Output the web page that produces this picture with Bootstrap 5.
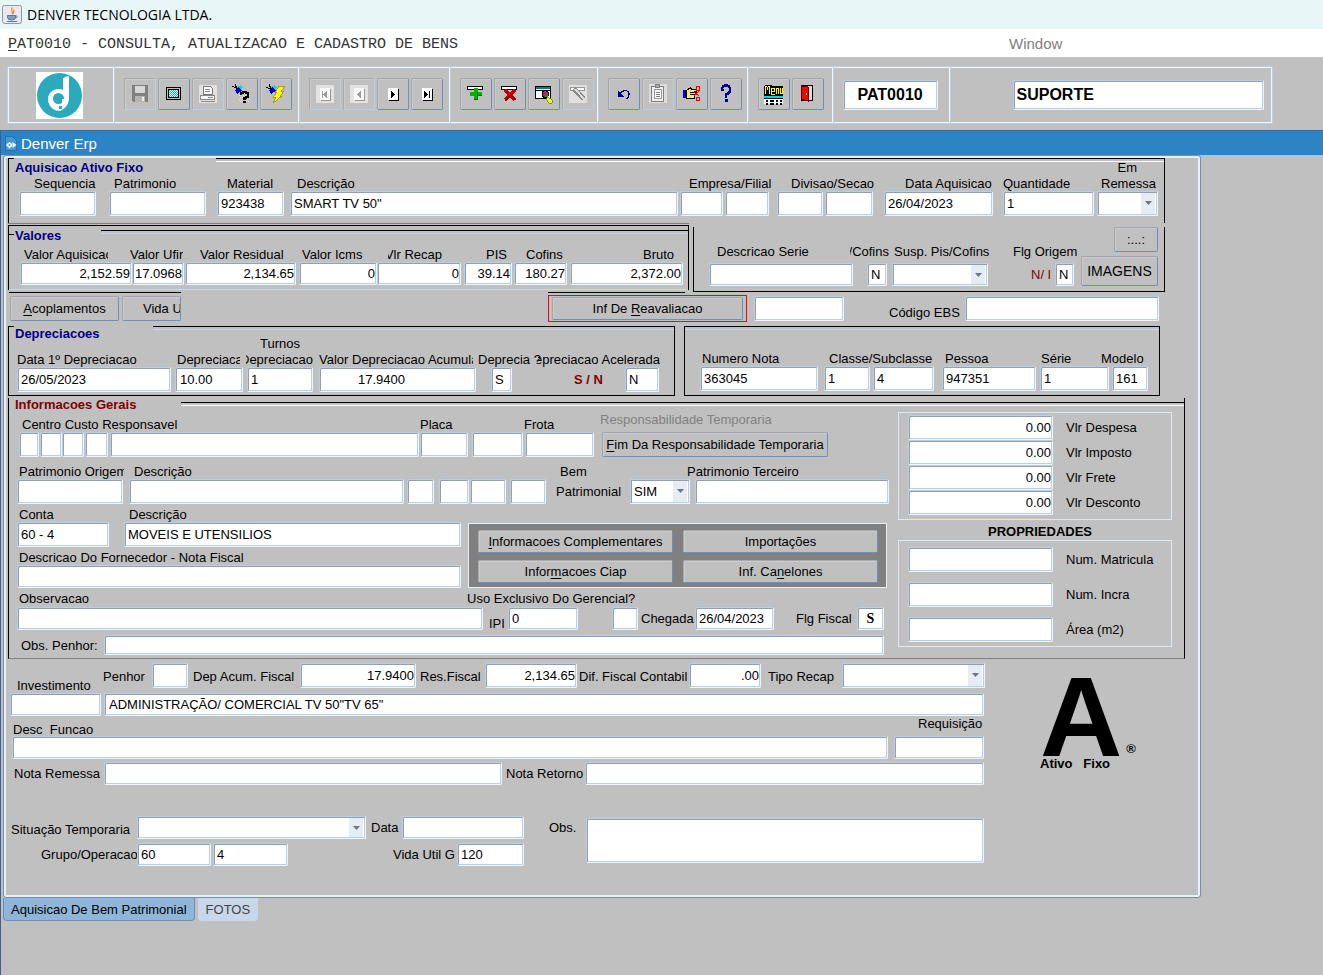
<!DOCTYPE html>
<html lang="pt-BR">
<head>
<meta charset="utf-8">
<meta name="viewport" content="width=device-width, initial-scale=1">
<title>DENVER TECNOLOGIA LTDA.</title>
<link href="https://cdn.jsdelivr.net/npm/bootstrap@5.3.0/dist/css/bootstrap.min.css" rel="stylesheet">
<style>
:root{--face:#c0c0c0;--line:#b8cfe5;--steel:#6f8fb3}
body{font:13px/15px "Liberation Sans",Arial,sans-serif;color:#000;background:var(--face)}
.titlebar{background:#e8f6f8;height:29px;font:14px/28px "Open Sans",sans-serif;gap:5px;padding-left:2px}
.menubar{height:28px;padding-left:8px;font:15px/31px "Liberation Mono",monospace;color:#333}
.menubar a{color:#333;text-decoration:none}
.menubar .win{font:15px/30px "Liberation Sans",sans-serif;color:#808080;flex:0 1 314px}
u{text-underline-offset:2px}
/* toolbar */
.tools{margin:9px 50px 6px 7px;border:1px solid var(--line);box-shadow:inset 0 0 0 1px #f2f6fb;display:grid;grid-template-columns:106fr 185fr 152fr 148fr 150fr 85fr 117fr 323fr;height:58px}
.tools>div{display:flex;align-items:center;gap:2px;padding:0 0 3px 10px;min-width:0;border-right:1px solid #f2f6fb;box-shadow:1px 0 var(--line)}
.tools>div:last-child{border:0;box-shadow:none;padding:0 8px 1px 63px}
.tools>div:first-child{padding:0 2px 0 0;justify-content:center}
.tools>.code{padding:0 11px 1px 10px}
.tbtn,.push{background:var(--face);border:1px solid;border-color:#a2a6ab var(--steel) var(--steel) #a2a6ab;border-radius:2px;padding:0;color:#000;box-shadow:inset 1px 1px #c9cbce}
.tbtn{width:32px;height:32px;flex:none;display:flex;align-items:center;justify-content:center}
.tbtn:disabled{border-color:#aaa var(--line) var(--line) #aaa}
.tbtn svg{width:22px;height:22px;shape-rendering:crispEdges;overflow:visible}
.push{height:25px;font-size:13px;line-height:15px;white-space:nowrap;overflow:hidden}
.big{font-size:14px;height:30px}
.dots{width:44px}
/* fields */
.fld{display:block;width:100%;min-width:0;height:25px;padding:0 3px;font-size:13px;line-height:15px;color:#000;background-color:#fff;border:1px solid;border-color:var(--line) #f0f5fb #f0f5fb var(--line);border-radius:2px;box-shadow:inset 1px 1px #959eac,inset -1px -1px var(--line)}
.low .fld{height:23px}
.fld.tiny{height:20px}
.num{text-align:right;padding-right:1px}
.num.spill{direction:rtl}
.code .fld,.user{font-weight:700;font-size:16px;height:30px}
.code .fld{text-align:center}
select.fld{appearance:none;padding-right:16px;border-radius:1px;background-image:url("data:image/svg+xml,%3Csvg xmlns='http://www.w3.org/2000/svg' viewBox='0 0 7 4'%3E%3Cpath fill='%236b7590' d='M0 0h7L3.500 4z'/%3E%3C/svg%3E"),linear-gradient(#e6ecf4,#e6ecf4);background-size:7px 4px,14px 100%;background-position:right 5px top 9px,right 2px top;background-repeat:no-repeat}
.indent{padding-left:38px}
.low textarea.fld{height:45px;resize:none;margin-top:2px}
.serif{font:700 14px/15px "Liberation Serif",serif;text-align:center}
/* form lines: tracks alternate space / item */
.ln{display:grid;min-width:0}
.ln>*{min-width:0;grid-row:1;white-space:nowrap}
.ln>:nth-child(1){grid-column:2}.ln>:nth-child(2){grid-column:4}.ln>:nth-child(3){grid-column:6}
.ln>:nth-child(4){grid-column:8}.ln>:nth-child(5){grid-column:10}.ln>:nth-child(6){grid-column:12}
.ln>:nth-child(7){grid-column:14}.ln>:nth-child(8){grid-column:16}.ln>:nth-child(9){grid-column:18}
.ln>:nth-child(10){grid-column:20}.ln>:nth-child(11){grid-column:22}
/* captions: one leading space, then item after item */
.cap{display:grid;min-width:0;align-items:end}
.cap>*{min-width:0;white-space:nowrap}
.cap>:first-child{grid-column:2}
.cut{overflow:hidden}
.cutl{overflow:hidden;display:flex;justify-content:flex-end}
.mid{align-items:center}
/* group frames */
.hd{display:flex;height:14px}
.hd .tick{width:5px;border-top:1px solid #000}
.hd h2{font-size:13px;font-weight:700;line-height:14px;margin:0;padding-left:1px;color:#000080;flex:none}
.rule{height:4px;border-top:1px solid #000;border-bottom:1px solid #c5d6ea}
.rule.w{border-bottom-color:#fff}
.maroon,.hd .maroon{color:#800000}
.gray{color:#808080}
.blk-l{border-left:1px solid #000}.blk-r{border-right:1px solid #000}.blk-b{border-bottom:1px solid #000}
.soft{border-bottom:1px solid #c9d9ea}
.sheet{margin:0 122px 0 2px;border:1px solid var(--steel);border-radius:3px;box-shadow:inset 0 0 0 2px #e9eff7;padding:2px 1px 2px 2px}
.frame{border-left:1px solid #3d5f92;min-height:845px}
.cappt{background:#2d84c4;color:#fff;height:25px;font-size:15px;line-height:27px;gap:4px;padding-left:4px;border-top:1px solid #3a6ea5}
.acq{margin:0 34px 0 2px}
.acqtop{padding-bottom:7px}
.acqtop .hd{height:18px}
.acqtop h2{line-height:20px;width:202px}
.acqtop .em{text-align:right;padding-right:27px;line-height:12px}
.acq2{display:grid;grid-template-columns:681fr 4fr 472fr}
.acq2>*{min-width:0}
.edge{height:3px;border-top:1px solid #808080;border-bottom:1px solid #000}
.valores h2{width:87px;line-height:12px}
.valores .c-v1{padding-top:7px}
.pisbox{padding-bottom:5px;margin-bottom:2px}
.pisbtns{padding-right:6px}
.redbox{border:1px solid #f00;padding:1px 3px}
.redbox .push{height:23px;display:block}
.duo{display:grid;grid-template-columns:2fr 667fr 9fr 476fr 39fr;padding-top:4px}
.dep{height:26px}
.dep h2{width:139px;line-height:16px}
.turn{padding:6px 0 0 107px}
.c-d2{padding-bottom:3px}
.nota{display:flex;flex-direction:column}
.nota .c-n1{flex-grow:1}
.infos{margin:2px 14px 0 2px;border-bottom:1px solid #808080}
.infos h2{width:167px}
.tall{height:20px}
.c-i3{padding-top:7px}
.gap3{padding-top:3px}
.gap2{padding-top:2px}
.side{border:1px solid #dfe9f5;padding:2px 0 4px}
.rightc{padding:0 12px 0 9px}
.prop{font-weight:700;line-height:24px;height:20px;text-align:center;padding-left:10px}
.wide{display:grid;gap:10px;padding-top:6px}
.dark{background:#808080;border:1px solid #e6eef8;padding:6px 8px 4px 9px;display:grid;grid-template-columns:1fr 1fr;gap:7px 10px}
.dark .push{border-top-color:#aaa;border-left-color:#aaa;height:23px}
.foot{padding:4px 0 29px}
.sit{padding-top:31px}
.brand{padding:14px 0 0 52px}
.biga{font-size:114px;line-height:79px;font-weight:700}
.brand b{line-height:15px}
.tabs{padding-left:2px;gap:3px}
.tabs button{border:1px solid var(--steel);border-top:0;border-radius:0 0 4px 4px;background:#8fb5d9;height:23px;padding:0 7px;line-height:15px}
.tabs button+button{background:#c9d7ea;border-color:#c9d7ea;color:#444}
/* column plans */
.c-a1{grid-template-columns:25fr 80fr 113fr 70fr 392fr 102fr 114fr 98fr 98fr 63fr}
.c-a2{grid-template-columns:10fr 77fr 13fr 97fr 11fr 67fr 6fr 388fr 2fr 43fr 2fr 44fr 8fr 46fr 2fr 48fr 11fr 109fr 10fr 91fr 3fr 61fr 6fr}
.c-v1{grid-template-columns:15fr 84fr 22fr 53fr 17fr 85fr 17fr 65fr 21fr 54fr 44fr 22fr 18fr 44fr 73fr 40fr 5fr}
.c-v2{grid-template-columns:11fr 112fr 0fr 52fr 1fr 111fr 3fr 78fr 0fr 84fr 3fr 48fr 2fr 53fr 3fr 113fr 5fr}
.c-v3{grid-template-columns:1fr 172fr 367fr 137fr 4fr}
.c-s0{grid-template-columns:387fr 83fr}
.c-s1{grid-template-columns:23fr 95fr 38fr 39fr 5fr 98fr 21fr 66fr 2fr}
.c-s2{grid-template-columns:15fr 144fr 14fr 20fr 5fr 96fr 43fr 20fr 4fr 19fr 7fr}
.c-b{grid-template-columns:4fr 109fr 3fr 59fr 367fr 199fr 7fr 90fr 45fr 72fr 4fr 194fr 40fr;padding-top:1px}
.c-d1{grid-template-columns:8fr 116fr 44fr 63fr 6fr 67fr 6fr 154fr 5fr 60fr 0fr 122fr 14fr}
.c-d2{grid-template-columns:8fr 154fr 4fr 68fr 4fr 66fr 6fr 157fr 15fr 21fr 62fr 30fr 21fr 34fr 15fr}
.c-n1{grid-template-columns:17fr 127fr 116fr 96fr 60fr 58fr}
.c-n2{grid-template-columns:15fr 118fr 6fr 46fr 3fr 61fr 8fr 94fr 4fr 69fr 3fr 36fr 11fr}
.c-i0{grid-template-columns:880fr 295fr}
.c-i1{grid-template-columns:13fr 398fr 104fr 76fr 289fr}
.c-i2{grid-template-columns:10fr 20fr 1fr 22fr 0fr 22fr 1fr 23fr 2fr 309fr 1fr 48fr 4fr 51fr 2fr 69fr 8fr 226fr 61fr}
.c-i3{grid-template-columns:10fr 105fr 10fr 60fr 366fr 30fr 97fr 116fr 86fr}
.c-i4{grid-template-columns:8fr 106fr 6fr 275fr 3fr 27fr 5fr 30fr 1fr 36fr 4fr 36fr 10fr 66fr 8fr 60fr 5fr 194fr}
.c-i5{grid-template-columns:459fr 419fr 2fr}
.c-i6{grid-template-columns:10fr 110fr 339fr}
.c-i7{grid-template-columns:8fr 92fr 15fr 337fr 7fr}
.c-i8{grid-template-columns:8fr 444fr 7fr}
.c-i9{grid-template-columns:10fr 448fr 422fr}
.c-i10{grid-template-columns:8fr 466fr 6fr 18fr 1fr 70fr 34fr 26fr 3fr 53fr 1fr 79fr 22fr 59fr 2fr 27fr 5fr;height:25px}
.c-i11{grid-template-columns:12fr 78fr 5fr 780fr 5fr;padding:4px 0 3px}
.c-r{grid-template-columns:9fr 145fr 13fr 105fr}
.c-z0{grid-template-columns:982fr 211fr}
.c-z1{grid-template-columns:11fr 78fr 8fr 45fr 4fr 36fr 5fr 106fr 1fr 116fr 4fr 64fr 1fr 92fr 2fr 109fr 1fr 72fr 7fr 68fr 6fr 143fr 3fr;height:30px}
.c-z2{grid-template-columns:4fr 91fr 3fr 880fr 4fr}
.c-z3{grid-template-columns:7fr 905fr 70fr;height:20px}
.c-z4{grid-template-columns:6fr 876fr 6fr 90fr 4fr}
.c-z5{grid-template-columns:8fr 87fr 3fr 398fr 4fr 78fr 1fr 399fr 4fr}
.c-z6{grid-template-columns:0fr 537fr 6fr 31fr 6fr 398fr 4fr}
.c-z7{grid-template-columns:5fr 121fr 5fr 229fr 5fr 29fr 2fr 122fr 19fr}
.c-z8{grid-template-columns:35fr 95fr 1fr 74fr 2fr 75fr 105fr 64fr 0fr 67fr 19fr}
.c-z1 label{line-height:28px}
.c-z1 .inv{line-height:15px;align-self:end}
.c-z3 .low-cap{line-height:12px}
.c-i0,.c-i5,.c-z0,.c-s0{display:grid}
.c-i0>*,.c-i5>*,.c-z0>*,.c-s0>*{min-width:0}
</style>
</head>
<body>
<header>
  <div class="titlebar d-flex align-items-center">
    <svg width="20" height="20" viewBox="0 0 20 20" aria-hidden="true"><rect x=".5" y=".5" width="19" height="18" rx="2" fill="#e9e9e9" stroke="#8b9aa3"/><path d="M10.500 2.500c-3 3 1.500 3.500-.5 6.500M12.500 5c-2 1.500 0 2.500-1.500 4" stroke="#e8853a" stroke-width="1.200" fill="none"/><path d="M5.500 10.500h8v2a4 2.500 0 0 1-8 0z" fill="#7d9fc0" stroke="#4d7ba6"/><path d="M13.500 11c2.500-.5 2 2-.5 2M5 16.500h10" stroke="#4d7ba6" fill="none"/></svg>
    <span>DENVER TECNOLOGIA LTDA.</span>
  </div>
  <nav class="menubar bg-white d-flex justify-content-between">
    <a href="#"><u>P</u>AT0010 - CONSULTA, ATUALIZACAO E CADASTRO DE BENS</a><a href="#" class="win">Window</a>
  </nav>
  <div class="tools" role="toolbar" aria-label="Ferramentas">
    <div><svg width="47" height="47" viewBox="0 0 47 47" role="img" aria-label="Denver"><path fill="#fff" d="M0 0h47v47H0z"/><circle cx="23.500" cy="23.500" r="22.500" fill="#2ba9bd"/><path fill="#fff" d="M27 6.500q3.500-3 6-2V26c0 5-2.500 9-6 11-1.500 2-5 2.500-8 1-4-2-7-6-7-11 0-6 5-10 10.500-10 1.700 0 3.300.3 4.500 1z"/><circle cx="22.500" cy="26.500" r="5.500" fill="#2ba9bd"/><path d="M27 27v5q-2 3-6 2" fill="none" stroke="#fff" stroke-width="2"/><circle cx="24.500" cy="35.500" r="1.800" fill="#2ba9bd"/></svg></div>
    <div>
      <button class="tbtn" disabled aria-label="Salvar"><svg viewBox="0 0 22 22"><path fill="#808080" d="M3 2h16v17H4l-1-1z"/><path fill="#d8d8d8" d="M6 3h10v7H6z"/><path fill="#b4b4b4" d="M6 13h10v6H6z"/><path fill="#eee" d="M13 14h2v4h-2z"/></svg></button>
      <button class="tbtn" aria-label="Tela"><svg viewBox="0 0 22 22"><path fill="none" stroke="#000" d="M3.500 4.500h14v12h-14zM5.500 6.500h10v8h-10z"/><path fill="#fff" d="M6 7h9v7H6z"/><path stroke="#00c8c8" stroke-dasharray="1 1" d="M6 7.500h9M7 8.500h8M6 9.500h9M7 10.500h8M6 11.500h9M7 12.500h8M6 13.500h9"/></svg></button>
      <button class="tbtn" disabled aria-label="Imprimir"><svg viewBox="0 0 22 22"><path fill="#e2e2e2" d="M2 2h18v18H2z"/><path fill="#fff" stroke="#777" d="M6.500 3.500h7l2 2v6h-9z"/><path stroke="#888" d="M8 6.500h5M8 8.500h5"/><path fill="#f5f5f5" stroke="#888" d="M3.500 12.500h14v4h-14z"/><path stroke="#888" d="M11 14.500h5M4 18.500h14"/></svg></button>
      <button class="tbtn" aria-label="Consulta"><svg viewBox="0 0 22 22"><path stroke="#000" d="M1 3l4 2M4 1l2 5"/><path fill="#00d8e8" d="M6 4l4-2 2 3-4 3z"/><path fill="#0000c8" d="M4 7l4-3 3 4-5 3z"/><path stroke="#ff0" stroke-dasharray="1 1" d="M9 10.500h10M8 12.500h11M9 14.500h10M8 16.500h11M9 18.500h10"/><path fill="none" stroke="#000" stroke-width="2.500" d="M10 12q0-3 3.500-3t3.500 3-3.500 3v2"/><path d="M12 18h3v2h-3z"/></svg></button>
      <button class="tbtn" aria-label="Executar"><svg viewBox="0 0 22 22"><path stroke="#000" d="M1 4l4 2M4 1l2 5"/><path fill="#00d8e8" d="M6 4l4-2 2 3-4 3z"/><path fill="#0000c8" d="M4 7l4-3 3 4-5 3z"/><path fill="#ff0" stroke="#8a8400" stroke-width=".7" d="M14 3h6l-4 5h3l-4 5h2l-9 7 3-6H8l4-5h-2z"/></svg></button>
    </div>
    <div>
      <button class="tbtn" disabled aria-label="Primeiro"><svg viewBox="0 0 22 22"><path fill="#e2e2e2" d="M2 2h18v18H2z"/><path fill="#fafafa" d="M6 5h10v12H6z"/><path fill="#999" d="M16 6h1v12H7v-1h9zM8 8h1v7H8zM13 8v7l-4-3.500z"/></svg></button>
      <button class="tbtn" disabled aria-label="Anterior"><svg viewBox="0 0 22 22"><path fill="#e2e2e2" d="M2 2h18v18H2z"/><path fill="#fafafa" d="M6 5h10v12H6z"/><path fill="#999" d="M16 6h1v12H7v-1h9zM13 8v7l-4-3.500z"/></svg></button>
      <button class="tbtn" aria-label="Proximo"><svg viewBox="0 0 22 22"><path fill="#fff" d="M6 5h10v12H6z"/><path d="M16 6h1v12H7v-1h9zM9 8v7l4-3.500z"/></svg></button>
      <button class="tbtn" aria-label="Ultimo"><svg viewBox="0 0 22 22"><path fill="#fff" d="M6 5h10v12H6z"/><path d="M16 6h1v12H7v-1h9zM8 8v7l4-3.500zM13 8h1v7h-1z"/></svg></button>
    </div>
    <div>
      <button class="tbtn" aria-label="Incluir"><svg viewBox="0 0 22 22"><path fill="#fff" stroke="#000" d="M2.500 3.500h15v3h-15z"/><path fill="#00b400" d="M9 5h4v4h4v4h-4v4H9v-4H5V9h4z"/><path fill="#006400" d="M12 9h1v8H9v-1h3zM13 12h4v1h-4z"/></svg></button>
      <button class="tbtn" aria-label="Excluir"><svg viewBox="0 0 22 22"><path fill="#fff" stroke="#000" d="M2.500 3.500h15v3h-15z"/><path stroke="#c00000" stroke-width="3" d="M6 7l10 10M16 7L6 17"/><path stroke="#600000" d="M6 18l5-5M17 17l-4-4"/></svg></button>
      <button class="tbtn" aria-label="Filtrar"><svg viewBox="0 0 22 22"><path fill="#fff" stroke="#000" d="M2.500 3.500h15v12h-15z"/><path fill="#008080" d="M3 4h14v2H3z"/><path fill="#000" d="M2 7h16v1H2z"/><path fill="#e0008c" stroke="#000" d="M9 9l3-2 3 2v4l-3 2-3-2z"/><path fill="#00a000" d="M12 11h3v3h-3z"/><path fill="#ff0" stroke="#665" stroke-width=".7" d="M15 14l4 3v3h-3l-3-4z"/></svg></button>
      <button class="tbtn" disabled aria-label="Limpar"><svg viewBox="0 0 22 22"><path fill="#e0e0e0" d="M2 2h18v18H2z"/><path fill="#fff" stroke="#999" d="M3.500 4.500h14v3h-14z"/><path stroke="#888" stroke-width="5" d="M7 6l10 10"/><path stroke="#ddd" stroke-width="2" d="M8 6l11 12"/></svg></button>
    </div>
    <div>
      <button class="tbtn" aria-label="Desfazer"><svg viewBox="0 0 22 22"><path fill="none" stroke="#000080" stroke-width="1.300" d="M6 12c2-5 10-6 10-1 0 2-1 4-3 5"/><path fill="#000080" d="M5 8v6h6z"/></svg></button>
      <button class="tbtn" disabled aria-label="Colar"><svg viewBox="0 0 22 22"><path fill="#ddd" d="M2 1h18v19H2z"/><path fill="#eee" stroke="#808080" d="M4.500 3.500h12v15h-12z"/><path fill="#aaa" stroke="#808080" d="M8.500 1.500h4v3h-4z"/><path fill="#fff" stroke="#999" d="M7.500 6.500h7v9h-7z"/><path stroke="#808080" d="M9 9.500h4M9 11.500h4M9 13.500h4"/></svg></button>
      <button class="tbtn" aria-label="Recortar"><svg viewBox="0 0 22 22"><path fill="#0000c8" d="M2 7h3v8H2z"/><path fill="#ffe95a" stroke="#000" d="M5.500 7.500l4-3 1 2h5v2h-2v1h2v2h-2v4h-8z"/><path stroke="#000" d="M9 9.500h4M9 11.500h4"/><path fill="none" stroke="#f00000" d="M13 9l5 4M13 13l5-5M15.500 3.500h3v4h-3zM15.500 14.500h3v3h-3z"/></svg></button>
      <button class="tbtn" aria-label="Ajuda"><svg viewBox="0 0 22 22"><path fill="none" stroke="#000090" stroke-width="2.500" d="M7 7q0-4.500 4-4.500t4 4-4 4.500v4"/><path fill="#000090" d="M6 6h3v2H6zM10 16h3v3h-3z"/></svg></button>
    </div>
    <div>
      <button class="tbtn" aria-label="Menu"><svg viewBox="0 0 22 22"><path d="M2 2h7v1h11v9H1V3h1z"/><path fill="none" stroke="#ff0" d="M2.500 11V2.500M3 3.500h1M4.500 4v3M5 3.500h1M6.500 11V2.500M12 11.500H8.500V5.500h3v3H9M13.500 11V5M14 5.500h1.500V11M17.500 5v5.500h2V5"/><path fill="#fff" d="M1 15h19v6H1z"/><path d="M1 12h19v1H1zM1 15h19v1H1z"/><path fill="#00d8e8" d="M1 13h19v2H1z"/><path stroke="#000" stroke-width="2" stroke-dasharray="2 2 4 2" d="M3 18h16M3 21h16"/></svg></button>
      <button class="tbtn" aria-label="Sair"><svg viewBox="0 0 22 22"><path fill="#ddd" stroke="#000" d="M4.500 2.500h11v15h-11z"/><path fill="#f00" stroke="#600" d="M4.500 3l6.500 1v14l-6.500-2z"/><path fill="#ff0" d="M9 10h1v2H9z"/></svg></button>
    </div>
    <div class="code"><input class="form-control fld" value="PAT0010" aria-label="Programa"></div>
    <div><input class="form-control fld user" value="SUPORTE" aria-label="Usuario"></div>
  </div>
</header>

<main class="frame">
  <div class="cappt d-flex align-items-center">
    <svg width="12" height="15" viewBox="0 0 12 15" aria-hidden="true"><path fill="#3f9ad6" stroke="#2470a8" d="M.5.5h7l4 4v10H.5z"/><path fill="#fff" d="M7.500 6v6l4-3z"/><circle cx="4.500" cy="9" r="1.800" fill="none" stroke="#fff" stroke-width="1.500"/><path stroke="#fff" d="M1 9h2M4.500 6v2M4.500 10.500v2"/></svg>
    <span>Denver Erp</span>
  </div>
  <form class="sheet" onsubmit="return false">
    <section class="acq">
      <div class="blk-l blk-r acqtop">
        <div class="hd"><span class="tick"></span><h2>Aquisicao Ativo Fixo</h2><div class="flex-grow-1"><div class="rule w"></div><div class="em">Em</div></div></div>
        <div class="cap c-a1">
          <label for="seq">Sequencia</label><label for="pat">Patrimonio</label><label for="mat">Material</label><label for="des">Descrição</label><label for="emp">Empresa/Filial</label><label for="div">Divisao/Secao</label><label for="dta">Data Aquisicao</label><label for="qtd">Quantidade</label><label for="rem">Remessa</label>
        </div>
        <div class="ln c-a2">
          <input class="form-control fld" id="seq"><input class="form-control fld" id="pat"><input class="form-control fld" id="mat" value="923438"><input class="form-control fld" id="des" value='SMART TV 50"'><input class="form-control fld" id="emp"><input class="form-control fld" aria-label="Filial"><input class="form-control fld" id="div"><input class="form-control fld" aria-label="Secao"><input class="form-control fld" id="dta" value="26/04/2023"><input class="form-control fld" id="qtd" value="1"><select class="form-select fld" id="rem"><option></option></select>
        </div>
      </div>
      <div class="acq2">
        <div>
          <div class="edge"></div>
          <div class="blk-l blk-r valores">
            <div class="hd pt-1"><span class="tick mt-1"></span><h2>Valores</h2><div class="rule flex-grow-1"></div></div>
            <div class="ln c-v1">
              <label for="vaq" class="cut">Valor Aquisicao</label><label for="vuf" class="cut">Valor Ufir</label><label for="vre">Valor Residual</label><label for="vic">Valor Icms</label><label for="vrc" class="cutl">Vlr Recap</label><label for="pis">PIS</label><label for="cof">Cofins</label><label for="bru">Bruto</label>
            </div>
            <div class="ln c-v2 low pb-1 soft">
              <input class="form-control fld num" id="vaq" value="2,152.59"><input class="form-control fld num spill" id="vuf" value="217.0968"><input class="form-control fld num" id="vre" value="2,134.65"><input class="form-control fld num" id="vic" value="0"><input class="form-control fld num" id="vrc" value="0"><input class="form-control fld num" id="pis" value="39.14"><input class="form-control fld num" id="cof" value="180.27"><input class="form-control fld num" id="bru" value="2,372.00">
            </div>
          </div>
          <div class="ln c-v3 gap2"><div class="blk-b"></div><div class="blk-b"></div></div>
        </div>
        <div></div>
        <div class="blk-l blk-b blk-r c-s0 mt-1 align-items-end pisbox">
          <div class="low">
            <div class="ln c-s1 gap2 pb-1">
              <label for="dse">Descricao Serie</label><label for="pco" class="cutl">P/Cofins</label><label for="spc">Susp. Pis/Cofins</label><label for="flo">Flg Origem</label>
            </div>
            <div class="ln c-s2">
              <input class="form-control fld" id="dse"><input class="form-control fld" id="pco" value="N"><select class="form-select fld" id="spc"><option></option></select><span class="maroon align-self-center">N/ I</span><input class="form-control fld" id="flo" value="N">
            </div>
          </div>
          <div class="d-flex flex-column align-items-end gap-1 pisbtns">
            <button class="push dots">:...:</button><button class="push big align-self-stretch">IMAGENS</button>
          </div>
        </div>
      </div>
    </section>

    <div class="ln c-b mid">
      <button class="push"><u>A</u>coplamentos</button><button class="push text-start ps-3"><span class="ps-1">Vida Util</span></button>
      <div class="redbox"><button class="push w-100">Inf De <u>R</u>eavaliacao</button></div>
      <input class="form-control fld" aria-label="Reavaliacao"><label for="ebs" class="pt-2">Código EBS</label><input class="form-control fld" id="ebs">
    </div>

    <div class="duo ln">
      <section class="blk-l blk-r blk-b">
        <div class="hd dep"><span class="tick"></span><h2>Depreciacoes</h2><div class="flex-grow-1"><div class="rule"></div><div class="turn">Turnos</div></div></div>
        <div class="ln c-d1">
          <label for="dd">Data 1º Depreciacao</label><label for="dp" class="cut">Depreciacao</label><label for="tu" class="cutl">Depreciacao</label><label for="vd" class="cut">Valor Depreciacao Acumulada</label><label for="de">Deprecia ?</label><label for="da" class="cutl">Depreciacao Acelerada</label>
        </div>
        <div class="ln c-d2">
          <input class="form-control fld" id="dd" value="26/05/2023"><input class="form-control fld ps-1" id="dp" value="10.00"><input class="form-control fld" id="tu" value="1"><input class="form-control fld indent" id="vd" value="17.9400"><input class="form-control fld" id="de" value="S"><b class="maroon align-self-center">S / N</b><input class="form-control fld" id="da" value="N">
        </div>
      </section>
      <section class="blk-l blk-r blk-b nota">
        <div class="rule"></div>
        <div class="cap c-n1">
          <label for="nn">Numero Nota</label><label for="cl">Classe/Subclasse</label><label for="pe">Pessoa</label><label for="se">Série</label><label for="mo">Modelo</label>
        </div>
        <div class="ln c-n2 pb-1">
          <input class="form-control fld" id="nn" value="363045"><input class="form-control fld" id="cl" value="1"><input class="form-control fld" aria-label="Subclasse" value="4"><input class="form-control fld" id="pe" value="947351"><input class="form-control fld" id="se" value="1"><input class="form-control fld" id="mo" value="161">
        </div>
      </section>
    </div>

    <section class="infos blk-l blk-r">
      <div class="hd"><span class="tick border-0"></span><h2 class="maroon">Informacoes Gerais</h2><div class="rule w flex-grow-1 mt-1"></div></div>
      <div class="c-i0">
        <div>
          <div class="cap c-i1 tall">
            <label for="cc">Centro Custo Responsavel</label><label for="pl">Placa</label><label for="fr">Frota</label><span class="gray align-self-start">Responsabilidade Temporaria</span>
          </div>
          <div class="ln c-i2">
            <input class="form-control fld" id="cc"><input class="form-control fld" aria-label="Centro 2"><input class="form-control fld" aria-label="Centro 3"><input class="form-control fld" aria-label="Centro 4"><input class="form-control fld" aria-label="Responsavel"><input class="form-control fld" id="pl"><input class="form-control fld" aria-label="Placa 2"><input class="form-control fld" id="fr"><button class="push"><u>F</u>im Da Responsabilidade Temporaria</button>
          </div>
          <div class="ln c-i3">
            <label for="po" class="cut">Patrimonio Origem</label><label for="d2">Descrição</label><label for="bp">Bem</label><label for="pt">Patrimonio Terceiro</label>
          </div>
          <div class="ln c-i4 mid">
            <input class="form-control fld" id="po"><input class="form-control fld" id="d2"><input class="form-control fld" aria-label="Campo 1"><input class="form-control fld" aria-label="Campo 2"><input class="form-control fld" aria-label="Campo 3"><input class="form-control fld" aria-label="Campo 4"><label for="bp">Patrimonial</label><select class="form-select fld" id="bp"><option>SIM</option></select><input class="form-control fld" id="pt">
          </div>
          <div class="c-i5 align-items-end">
            <div>
              <div class="cap c-i6 gap3"><label for="co">Conta</label><label for="d3">Descrição</label></div>
              <div class="ln c-i7"><input class="form-control fld" id="co" value="60 - 4"><input class="form-control fld" id="d3" value="MOVEIS E UTENSILIOS"></div>
              <div class="cap c-i6 gap3"><label for="fo">Descricao Do Fornecedor - Nota Fiscal</label></div>
              <div class="ln c-i8 low"><input class="form-control fld" id="fo"></div>
            </div>
            <div class="dark">
              <button class="push"><u>I</u>nformacoes Complementares</button><button class="push">Importações</button><button class="push">Infor<u>m</u>acoes Ciap</button><button class="push">Inf. Ca<u>n</u>elones</button>
            </div>
          </div>
          <div class="cap c-i9 gap3"><label for="ob">Observacao</label><label for="us">Uso Exclusivo Do Gerencial?</label></div>
          <div class="ln c-i10 mid low">
            <input class="form-control fld" id="ob"><label for="ipi" class="align-self-end">IPI</label><input class="form-control fld" id="ipi" value="0"><input class="form-control fld" id="us"><label for="ch">Chegada</label><input class="form-control fld" id="ch" value="26/04/2023"><label for="ff">Flg Fiscal</label><input class="form-control fld serif" id="ff" value="S">
          </div>
          <div class="ln c-i11 mid"><label for="op">Obs. Penhor:</label><input class="form-control fld tiny" id="op"></div>
        </div>
        <div class="rightc">
          <div class="side">
            <div class="ln c-r mid"><input class="form-control fld num" id="r1" value="0.00"><label for="r1">Vlr Despesa</label></div>
            <div class="ln c-r mid"><input class="form-control fld num" id="r2" value="0.00"><label for="r2">Vlr Imposto</label></div>
            <div class="ln c-r mid"><input class="form-control fld num" id="r3" value="0.00"><label for="r3">Vlr Frete</label></div>
            <div class="ln c-r mid"><input class="form-control fld num" id="r4" value="0.00"><label for="r4">Vlr Desconto</label></div>
          </div>
          <div class="prop">PROPRIEDADES</div>
          <div class="side wide">
            <div class="ln c-r mid"><input class="form-control fld" id="r5"><label for="r5">Num. Matricula</label></div>
            <div class="ln c-r mid"><input class="form-control fld" id="r6"><label for="r6">Num. Incra</label></div>
            <div class="ln c-r mid"><input class="form-control fld" id="r7"><label for="r7">Área (m2)</label></div>
          </div>
        </div>
      </div>
    </section>

    <section class="c-z0 foot">
      <div>
        <div class="ln c-z1">
          <label for="in" class="inv">Investimento</label><label for="ph">Penhor</label><input class="form-control fld" id="ph"><label for="df">Dep Acum. Fiscal</label><input class="form-control fld num" id="df" value="17.9400"><label for="rf">Res.Fiscal</label><input class="form-control fld num" id="rf" value="2,134.65"><label for="dc">Dif. Fiscal Contabil</label><input class="form-control fld num" id="dc" value=".00"><label for="tr">Tipo Recap</label><select class="form-select fld" id="tr"><option></option></select>
        </div>
        <div class="ln c-z2 low"><input class="form-control fld" id="in"><input class="form-control fld ps-1" aria-label="Descricao do investimento" value='ADMINISTRAÇÃO/ COMERCIAL TV 50"TV 65"'></div>
        <div class="cap c-z3"><label for="fu" class="low-cap">Desc&nbsp; Funcao</label><label for="rq" class="align-self-start">Requisição</label></div>
        <div class="ln c-z4 low"><input class="form-control fld" id="fu"><input class="form-control fld" id="rq"></div>
        <div class="ln c-z5 mid low gap3"><label for="nr">Nota Remessa</label><input class="form-control fld" id="nr"><label for="nt">Nota Retorno</label><input class="form-control fld" id="nt"></div>
        <div class="ln c-z6 sit low">
          <div>
            <div class="ln c-z7 mid"><label for="st" class="gap3">Situação Temporaria</label><select class="form-select fld" id="st"><option></option></select><label for="dt">Data</label><input class="form-control fld" id="dt"></div>
            <div class="ln c-z8 mid pt-1"><label for="gr">Grupo/Operacao</label><input class="form-control fld" id="gr" value="60"><input class="form-control fld" aria-label="Operacao" value="4"><label for="vu">Vida Util G</label><input class="form-control fld" id="vu" value="120"></div>
          </div>
          <label for="obs" class="pt-1">Obs.</label><textarea class="form-control fld" id="obs"></textarea>
        </div>
      </div>
      <div class="brand">
        <div class="d-flex align-items-end"><span class="biga">A</span><b class="px-1">®</b></div>
        <b>Ativo &nbsp; Fixo</b>
      </div>
    </section>
  </form>
  <nav class="tabs d-flex"><button type="button">Aquisicao De Bem Patrimonial</button><button type="button">FOTOS</button></nav>
</main>
<script src="https://cdn.jsdelivr.net/npm/bootstrap@5.3.0/dist/js/bootstrap.bundle.min.js"></script>
</body>
</html>
